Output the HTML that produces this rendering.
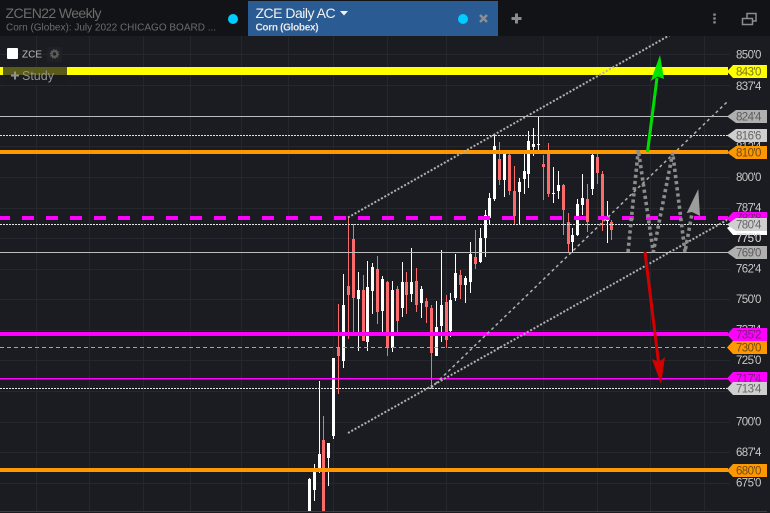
<!DOCTYPE html>
<html><head><meta charset="utf-8"><style>
html,body{margin:0;padding:0;background:#1b1c21;width:770px;height:513px;overflow:hidden}
svg{display:block;position:absolute;left:0;top:0}
text{font-family:"Liberation Sans",sans-serif}
.t{font-size:11.5px;fill:#c8c8c8;letter-spacing:-.6px}
.l{font-size:11.5px;letter-spacing:-.6px}
</style></head><body>
<svg width="770" height="513" viewBox="0 0 770 513">
<rect width="770" height="513" fill="#1b1c21"/>
<!-- grid -->
<path fill="none" stroke="#26272c" stroke-width="1" d="M36.5 36V511M89.5 36V511M143.5 36V511M190.5 36V511M241.5 36V511M288.5 36V511M333.5 36V511M387.5 36V511M446.5 36V511M543.5 36V511M597.5 36V511M650.5 36V511M704.5 36V511M0 54.5H730M0 85.5H730M0 116.5H730M0 146.5H730M0 177.5H730M0 208.5H730M0 238.5H730M0 269.5H730M0 299.5H730M0 330.5H730M0 360.5H730M0 391.5H730M0 422.5H730M0 452.5H730M0 483.5H730"/>
<!-- candles -->
<path fill="none" stroke="#fff" stroke-width="1" d="M309.5 478V511M314.5 464V501M319.5 381V473M328.5 443V486M333.5 358V439M343.5 274V368M358.5 272V351M367.5 261V351M372.5 263V314M382.5 276V333M392.5 281V352M402.5 262V317M411.5 248V302M421.5 286V318M436.5 301V356M441.5 250V342M450.5 293V337M455.5 254V301M465.5 276V303M470.5 242V293M480.5 228V263M485.5 210V257M489.5 193V224M494.5 135V201M504.5 150V197M519.5 178V224M524.5 154V194M528.5 131V188M533.5 128V156M538.5 117V150M553.5 167V203M558.5 171V199M572.5 228V252M577.5 199V236M582.5 174V215M592.5 153V195M607.5 201V243"/>
<path fill="none" stroke="#fff" stroke-width="3" d="M309.5 479V511M314.5 472V490M319.5 454V472M328.5 443V458M333.5 358V436M343.5 305V361M358.5 290V299M367.5 287V342M372.5 267V291M382.5 279V311M392.5 290V348M402.5 282V308M411.5 282V294M421.5 289V303M436.5 327V356M441.5 305V326M450.5 300V331M455.5 273V298M465.5 278V285M470.5 254V282M480.5 238V262M485.5 215V238M489.5 198V218M494.5 146V199M504.5 150V180M519.5 182V192M524.5 171V179M528.5 141V174M533.5 144V147M538.5 144V145M553.5 193V194M558.5 185V191M572.5 235V242M577.5 204V235M582.5 198V205M592.5 155V189M607.5 220V221"/>
<path fill="none" stroke="#fb6b6b" stroke-width="1" d="M323.5 416V511M338.5 304V394M348.5 217V339M353.5 224V335M363.5 275V341M377.5 256V324M387.5 281V356M397.5 286V333M406.5 272V314M416.5 268V312M426.5 298V323M431.5 305V389M446.5 295V348M460.5 270V299M475.5 230V269M499.5 142V185M509.5 150V195M514.5 166V224M543.5 155V200M548.5 143V197M563.5 184V235M568.5 213V252M587.5 184V232M597.5 154V184M602.5 171V231M611.5 220V240"/>
<path fill="none" stroke="#fb6b6b" stroke-width="3" d="M323.5 440V511M338.5 347V356M348.5 286V295M353.5 239V298M363.5 290V341M377.5 269V312M387.5 282V347M397.5 289V321M406.5 282V295M416.5 281V305M426.5 301V307M431.5 308V353M446.5 302V340M460.5 275V285M475.5 257V264M499.5 159V180M509.5 155V191M514.5 191V216M543.5 164V167M548.5 154V194M563.5 185V210M568.5 222V244M587.5 199V222M597.5 157V173M602.5 174V220M611.5 222V230"/>
<!-- horizontal levels -->
<rect x="0" y="67" width="728" height="8" fill="#ffff00"/>
<path d="M0 116.5H728" stroke="#bcbcbc" stroke-width="1"/>
<path d="M0 135.5H728" stroke="#e0e0e0" stroke-width="1" stroke-dasharray="2 1"/>
<rect x="0" y="150" width="728" height="4" fill="#ff9800"/>
<path d="M-2 218H728" stroke="#ff00ff" stroke-width="4" stroke-dasharray="12 12"/>
<path d="M0 224.5H728" stroke="#e8e8e8" stroke-width="1" stroke-dasharray="2 1"/>
<path d="M0 252.5H728" stroke="#bcbcbc" stroke-width="1"/>
<rect x="0" y="332" width="728" height="4" fill="#ff00ff"/>
<path d="M0 347.5H728" stroke="#ff9800" stroke-width="1" stroke-dasharray="4 3"/>
<rect x="0" y="378" width="728" height="1.5" fill="#ff00ff"/>
<path d="M0 388.5H728" stroke="#e8e8e8" stroke-width="1" stroke-dasharray="2 1"/>
<rect x="0" y="468" width="728" height="4" fill="#ff9800"/>
<!-- trend lines -->
<path d="M348 217.5L670 35" fill="none" stroke="#b0b0b0" stroke-width="2" stroke-dasharray="2 1.800"/>
<path d="M348 433L727 220" fill="none" stroke="#b0b0b0" stroke-width="2" stroke-dasharray="2 1.800"/>
<path d="M431 388L727 102" fill="none" stroke="#b0b0b0" stroke-width="1.500" stroke-dasharray="3 3"/>
<!-- zigzag -->
<path d="M628 252L638.3 150L653.3 252L672.7 153L685 252L691.7 215" fill="none" stroke="#8c8c8c" stroke-width="3.600" stroke-dasharray="3.200 3"/>
<path d="M698.3 189L686.7 213L692 212L700 216Z" fill="#9c9c9c"/>
<!-- arrows -->
<path d="M647.5 152L657 78" fill="none" stroke="#00dd00" stroke-width="3"/>
<path d="M660 55L650.7 81L657.5 76.5L664 79Z" fill="#00e600"/>
<path d="M645 252L658.5 362" fill="none" stroke="#d40000" stroke-width="3"/>
<path d="M661 384L652 359L659 362L665 357Z" fill="#d40000"/>
<!-- axis ticks -->
<g class="t">
<text x="736" y="58.500">850'0</text>
<text x="736" y="90">837'4</text>
<text x="736" y="150.500">812'4</text>
<text x="736" y="181">800'0</text>
<text x="736" y="211.500">787'4</text>
<text x="736" y="242">775'0</text>
<text x="736" y="272.500">762'4</text>
<text x="736" y="303">750'0</text>
<text x="736" y="333.500">737'4</text>
<text x="736" y="364">725'0</text>
<text x="736" y="425.500">700'0</text>
<text x="736" y="456">687'4</text>
<text x="736" y="486.500">675'0</text>
</g>
<!-- labels -->
<g class="l">
<path d="M727 71.500L733 65H767V78H733Z" fill="#ffff00"/><text x="736" y="75.500" fill="#77771a">843'0</text>
<path d="M727 116.500L736 110H767V123H736Z" fill="#b0b0b0"/><text x="736" y="120.500" fill="#5c5c5c">824'4</text>
<path d="M727 135.500L736 129H767V142H736Z" fill="#cfcfcf"/><text x="736" y="139.500" fill="#666">816'6</text>
<path d="M727 152.500L736 146H767V159H736Z" fill="#ff9800"/><text x="736" y="156.500" fill="#6e4a14">810'0</text>
<path d="M727 218.500L733 212H767V225H733Z" fill="#ff00ff"/><text x="736" y="222" fill="#7a1f7a">782'8</text>
<path d="M727 228L733 224H767V235H733Z" fill="#fff"/>
<path d="M727 224.500L736 218H767V231H736Z" fill="#cfcfcf"/><text x="736" y="228.500" fill="#666">780'4</text>
<text x="736" y="242" class="t">775'0</text>
<path d="M727 252.500L736 246H767V259H736Z" fill="#b0b0b0"/><text x="736" y="256.500" fill="#5c5c5c">769'0</text>
<path d="M727 334.500L733 328H767V341H733Z" fill="#ff00ff"/><text x="736" y="338.500" fill="#7a1f7a">735'2</text>
<path d="M727 347.500L733 341H767V354H733Z" fill="#ff9800"/><text x="736" y="351.500" fill="#6e4a14">730'0</text>
<path d="M727 378.500L733 372H767V385H733Z" fill="#ff00ff"/><text x="736" y="382.500" fill="#7a1f7a">717'4</text>
<path d="M727 388.500L733 382H767V395H733Z" fill="#cfcfcf"/><text x="736" y="392.500" fill="#666">713'4</text>
<path d="M727 470.500L733 464H767V477H733Z" fill="#ff9800"/><text x="736" y="474.500" fill="#6e4a14">680'0</text>
</g>
<path d="M0 511.500H767" stroke="#3c3d42" stroke-width="1"/>
<!-- top bar -->
<rect x="0" y="0" width="770" height="36" fill="#121316"/>
<text x="5.500" y="18" font-size="14" fill="#6c6c6c" letter-spacing="-.6">ZCEN22 Weekly</text>
<text x="6" y="30.500" font-size="10" fill="#6c6c6c">Corn (Globex): July 2022 CHICAGO BOARD ...</text>
<circle cx="233" cy="19" r="5" fill="#00ccff"/>
<rect x="248" y="1" width="250" height="35" fill="#2a5b92"/>
<text x="255.500" y="18" font-size="14" fill="#f2f2f2" letter-spacing="-.5">ZCE Daily AC</text>
<path d="M340 11H348L344 15.500Z" fill="#f2f2f2"/>
<text x="255.500" y="30.500" font-size="10" font-weight="bold" fill="#e8e8e8" letter-spacing="-.3">Corn (Globex)</text>
<circle cx="463" cy="19" r="5" fill="#00ccff"/>
<path d="M480 15L487 22M487 15L480 22" stroke="#8a8f96" stroke-width="2.500"/>
<path d="M516.500 13.500V23.500M511.500 18.500H521.500" stroke="#8c8c8c" stroke-width="3"/>
<path d="M714.500 13.500V23.500" stroke="#8c8c8c" stroke-width="2.500" stroke-dasharray="2.200 1.700"/>
<rect x="742.500" y="18.500" width="10" height="6" fill="#121316" stroke="#8c8c8c" stroke-width="1.500"/>
<path d="M747 18V13.500H756V21H753" fill="none" stroke="#8c8c8c" stroke-width="1.500"/>
<!-- legend -->
<rect x="7" y="48" width="11" height="11" rx="1" fill="#fff"/>
<text x="22" y="57.500" font-size="10" fill="#bdbdbd">ZCE</text>
<rect x="47" y="47" width="15" height="15" fill="#202126"/>
<circle cx="54.500" cy="54" r="2.800" fill="none" stroke="#5c5c5c" stroke-width="2.200"/>
<circle cx="54.500" cy="54" r="4.200" fill="none" stroke="#5c5c5c" stroke-width="1.200" stroke-dasharray="1.300 1.300"/>
<rect x="3" y="67" width="64" height="18" fill="#1b1c21" fill-opacity=".72"/>
<path d="M15 71.500V79.500M11 75.500H19" stroke="#929292" stroke-width="2"/>
<text x="22" y="80" font-size="12.500" fill="#929292">Study</text>
</svg>
</body></html>
